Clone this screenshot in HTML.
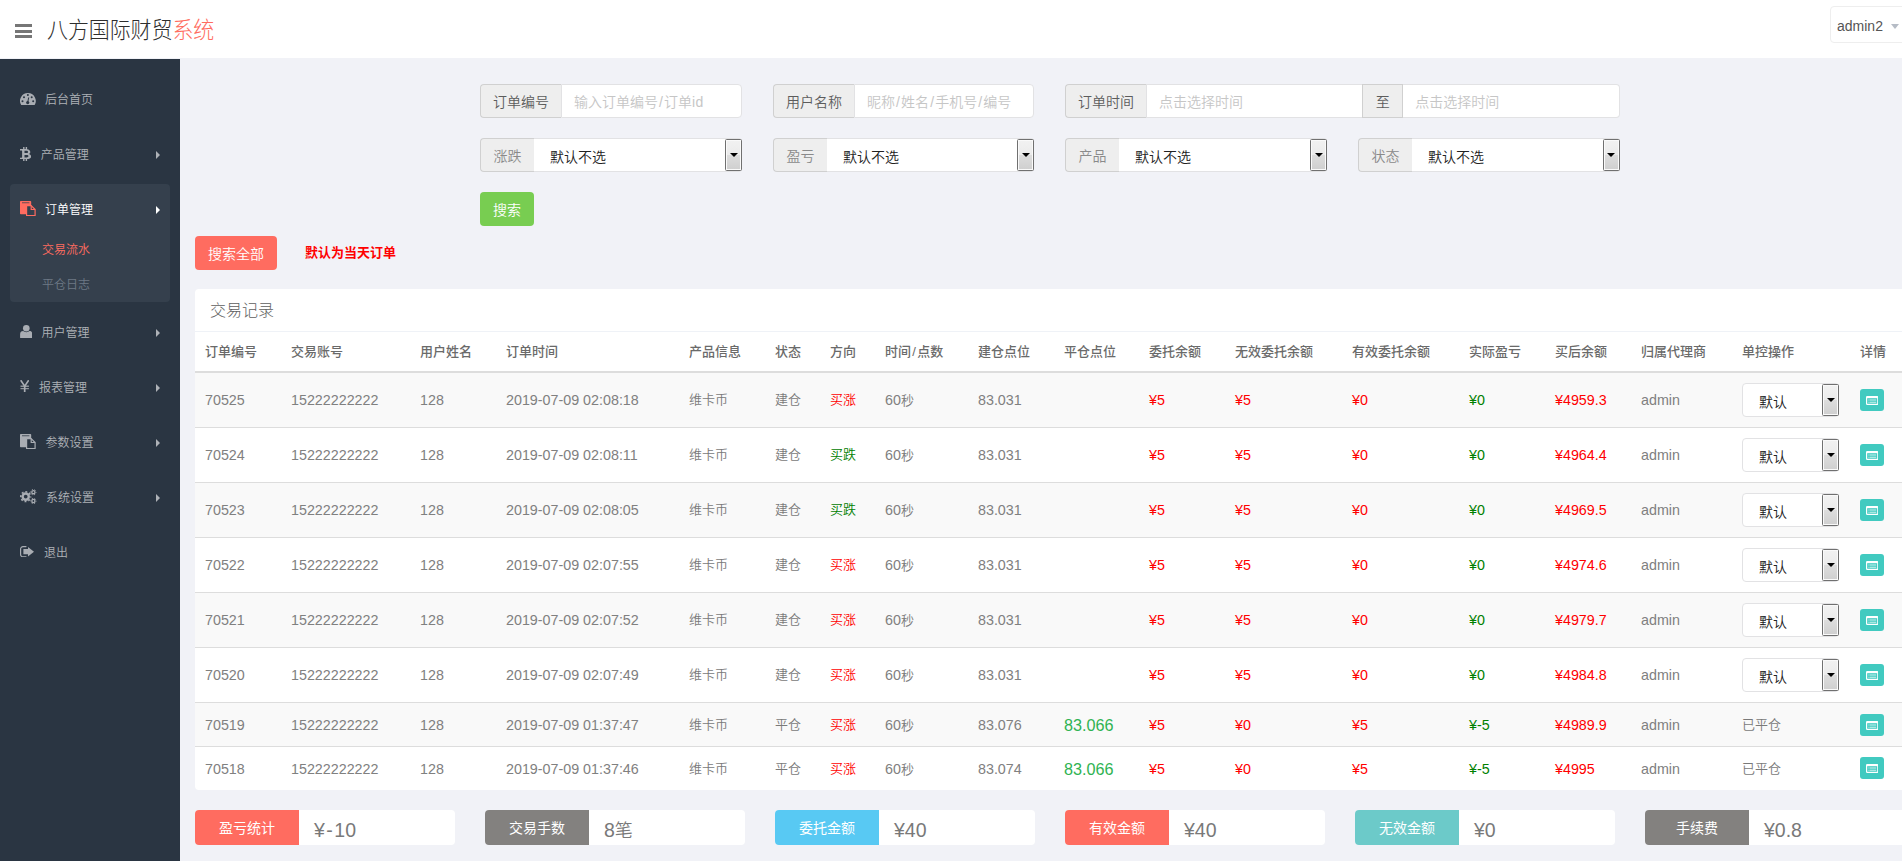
<!DOCTYPE html>
<html lang="zh-CN">
<head>
<meta charset="utf-8">
<title>八方国际财贸系统</title>
<style>
*{box-sizing:border-box}
html,body{margin:0;padding:0}
body{width:1902px;height:861px;overflow:hidden;position:relative;background:#f1f2f7;color:#797979;
 font-family:"Liberation Sans","Noto Sans CJK SC",sans-serif;font-size:13px;line-height:1.428;font-weight:350}
.abs{position:absolute}
/* header */
#hd{position:absolute;left:0;top:0;width:1902px;height:58px;background:#fff}
#bars{position:absolute;left:15px;top:24px;width:17px;height:14px}
#bars i{display:block;height:3px;background:#767676;margin-bottom:2.5px}
#logo{position:absolute;left:47px;top:14px;transform:scaleY(1.08);transform-origin:50% 50%;font-size:21px;line-height:32px;color:#2e2e2e;font-weight:300;white-space:nowrap;letter-spacing:-0.1px}
#logo span{color:#ff6c60}
#user{position:absolute;left:1830px;top:6px;width:90px;height:37px;border:1px solid #eee;border-radius:4px;background:#fff}
#user b{position:absolute;left:6px;top:9px;font-weight:normal;font-size:14px;line-height:20px;color:#555}
#user i{position:absolute;left:59.500px;top:17px;width:0;height:0;border-left:4px solid transparent;border-right:4px solid transparent;border-top:5px solid #b6bcc6}
/* sidebar */
#sb{position:absolute;left:0;top:59px;width:180px;height:802px;background:#2a3542}
#sb .act{position:absolute;left:10px;top:125px;width:160px;height:118px;background:#35404d;border-radius:4px}
.mi{position:absolute;left:0;width:180px;height:20px;font-size:12px;line-height:20px;color:#aeb2b7;white-space:nowrap}
.mi svg{position:absolute}
.mi em{position:absolute;font-style:normal;top:0}
.mi u{position:absolute;left:156px;top:6px;width:0;height:0;border-top:4px solid transparent;border-bottom:4px solid transparent;border-left:4.5px solid #aeb2b7}
.mi.on{color:#fff}
.mi.on u{border-left-color:#fff}
.sub{position:absolute;left:42px;font-size:12px;line-height:20px;height:20px;color:#6e7985;white-space:nowrap}
.sub.on{color:#ff6c60}

/* form */
.ig{position:absolute;height:34px;display:flex;font-size:14px;line-height:20px}
.ig>*{height:34px;border:1px solid #e2e2e4;padding:7px 12px 5px;white-space:nowrap;background:#fff}
.ig .ad{background:#eee;border-color:#d0d0d0;color:#5c5c5c;border-radius:4px 0 0 4px;border-right:0;flex:none}
.ig .ad.l{color:#8a8a8a;width:54px;padding-left:0;padding-right:0;text-align:center}
.ig .mid{border-radius:0;border-left:1px solid #d0d0d0;border-right:1px solid #d0d0d0}
.ig .in{flex:1;color:#c6c6c6;border-radius:0 4px 4px 0}
.ig .in.sq{border-radius:0;border-right:0}
.ig .sel{flex:1;color:#222;border-radius:0 4px 4px 0;position:relative;padding:8px 12px 4px 16px;border-left:0}
.dd{position:absolute;right:-1px;top:0;width:17px;height:32px;border:1px solid #707070;border-radius:1.500px;background:linear-gradient(#f2f2f2,#ebebeb 49%,#dddddd 50%,#cfcfcf);box-shadow:inset 0 0 0 1px #fafafa}
.dd:after{content:"";position:absolute;left:3.500px;top:12.500px;border-left:4px solid transparent;border-right:4px solid transparent;border-top:4.500px solid #000}
.btn{position:absolute;height:34px;border-radius:4px;color:#fff;font-size:14px;line-height:20px;padding:8px 0 6px;text-align:center;white-space:nowrap}

/* panel */
#panel{position:absolute;left:195px;top:289px;width:1720px;height:501px;background:#fff;border-radius:4px}
#ph{position:absolute;left:15px;top:11px;font-size:16px;line-height:22px;font-weight:300;color:#5e5e5e;white-space:nowrap}
#phb{position:absolute;left:0;top:42px;width:100%;height:1px;background:#eff2f7}
table{position:absolute;left:0;top:43px;border-collapse:separate;border-spacing:0;table-layout:fixed;width:1720px}
th,td{padding:0 10px;text-align:left;vertical-align:middle;white-space:nowrap;overflow:visible}
th{height:41px;border-bottom:2px solid #ddd;font-weight:500;font-size:13px;color:#6a6a6a;padding-top:2px}
td{height:55px;border-bottom:1px solid #ddd;font-size:14.300px;padding-top:0;color:#808080}
tr.s td{height:44px;padding-top:2px}
tr.s .dt{position:relative;top:-1px}
tr.last .dt{top:-2px}
tr.last td{border-bottom:0;height:43px}
tr.o td{background:#f9f9f9}
td .c,td.c{font-size:13px;color:#797979}
td.c.r,td.r{color:#f00}td.c.g,td.g{color:#008000}
.r{color:#f00}.g{color:#008000}
.big{font-size:16.200px;color:#2fb352}
.tsel{position:relative;width:97px;height:34px;border:1px solid #e2e2e4;border-radius:4px;background:#fff;color:#222;font-size:14px;line-height:20px;padding:7.500px 0 0 16px}
.dt{display:block;width:24px;height:22px;border-radius:3px;background:#41cac0;position:relative}
.dt svg{position:absolute;left:5.800px;top:7px}
/* stats */
.st{position:absolute;top:810px;width:260px;height:35px;background:#fff;border-radius:4px;overflow:hidden}
.st b{position:absolute;left:0;top:0;width:104px;height:35px;color:#fff;font-weight:normal;font-size:14px;line-height:20px;padding-top:8px;text-align:center}
.st span{position:absolute;left:119px;top:7px;font-size:19.500px;line-height:26px;color:#797979;white-space:nowrap}
.st span i{font-style:normal;font-size:18px}
</style>
</head>
<body>
<div id="hd">
  <div id="bars"><i></i><i></i><i></i></div>
  <div id="logo">八方国际财贸<span>系统</span></div>
  <div id="user"><b>admin2</b><i></i></div>
</div>
<div id="sb">
  <div class="act"></div>
  <div class="mi" style="top:30.500px"><svg width="15.800" height="12.500" viewBox="0 0 15.800 12.500" style="left:19.750px;top:3.200px"><path d="M7.900 0a7.900 7.900 0 0 0-6.600 12.200c.2.200.4.300.7.300h11.800c.3 0 .5-.1.7-.3A7.900 7.900 0 0 0 7.900 0z" fill="#a9adb3"/><g fill="#2a3542"><circle cx="7.900" cy="2.100" r="1"/><circle cx="4" cy="4.200" r="1"/><circle cx="11.700" cy="4.200" r="1"/><circle cx="2.500" cy="8.300" r="1"/><circle cx="13.200" cy="8.300" r="1"/><circle cx="7.700" cy="9.600" r="1.600"/><path d="M7.200 9.200l1-4.800 1 .2-1 4.800z"/></g></svg><em style="left:45px;top:.5px">后台首页</em></div>
  <div class="mi" style="top:85.500px"><svg width="11.200" height="14.100" viewBox="0 0 11.200 14.100" style="left:19.900px;top:2.500px"><path fill-rule="evenodd" fill="#a9adb3" d="M3.100 0h1.400v2.100h1.200V0h1.400v2.150c2 .2 3.200 1.250 3.200 2.750 0 1.100-.6 1.800-1.500 2.100 1.400.3 2.300 1.200 2.300 2.500 0 1.600-1.400 2.400-4 2.500v2.100H5.700V12H4.500v2.100H3.100V12H0v-1.300h1.600c.3 0 .5-.2.500-.5V3.900c0-.3-.2-.5-.5-.5H0V2.100h3.100zM4.500 3.800v2.300h1.800C7.400 6.100 8 5.700 8 4.900S7.400 3.800 6.300 3.800zM4.500 7.900v2.500h2.100c1.200 0 1.900-.4 1.900-1.300S7.800 7.900 6.600 7.900z"/></svg><em style="left:40.700px;top:.5px">产品管理</em><u></u></div>
  <div class="mi on" style="top:140.500px"><svg width="15.700" height="15.300" viewBox="0 0 15.700 15.300" style="left:19.9px;top:1.3px"><path d="M.8 0h9.600a.8.8 0 0 1 .8.8v12.400H.8a.8.8 0 0 1-.8-.8V.8A.8.8 0 0 1 .8 0z" fill="#ff6c60"/><path d="M2.400 1.750h6.600" stroke="#35404d" stroke-width=".75" stroke-linecap="round"/><path d="M6.600 4.600h4.600l3.900 3.900v6.200H6.600z" fill="#35404d" stroke="#ff6c60" stroke-width="1.200" stroke-linejoin="round"/><path d="M11.200 4.600v3.900h3.900" fill="none" stroke="#ff6c60" stroke-width="1.200"/></svg><em style="left:45px;top:.5px">订单管理</em><u></u></div>
  <div class="sub on" style="top:181px">交易流水</div>
  <div class="sub" style="top:215.500px">平仓日志</div>
  <div class="mi" style="top:264px"><svg width="12.600" height="13.500" viewBox="0 0 12.600 13.500" style="left:19.750px;top:1.800px"><g fill="#a9adb3"><circle cx="6.300" cy="3.300" r="3.300"/><path d="M.1 12.400V9.300c0-2 1.300-3.200 3-3.200.8.700 1.900 1.100 3.200 1.100s2.400-.4 3.200-1.100c1.700 0 3 1.200 3 3.200v3.100c0 .6-.4 1.100-1 1.100H1.100c-.6 0-1-.5-1-1.100z"/></g></svg><em style="left:41.600px">用户管理</em><u></u></div>
  <div class="mi" style="top:319px"><svg width="9.400" height="12.400" viewBox="0 0 9.400 12.400" style="left:19.750px;top:1.800px"><g fill="none" stroke="#a9adb3"><path d="M.7.200l4 5.900 4-5.900" stroke-width="1.600"/><path d="M4.700 5.700v6.700" stroke-width="1.700"/><path d="M.5 6.200h8.400" stroke-width="1.200"/><path d="M.5 8.700h8.400" stroke-width="1"/></g></svg><em style="left:39px">报表管理</em><u></u></div>
  <div class="mi" style="top:374px"><svg width="15.700" height="15.300" viewBox="0 0 15.700 15.300" style="left:19.9px;top:0.8px"><path d="M.8 0h9.600a.8.8 0 0 1 .8.8v12.400H.8a.8.8 0 0 1-.8-.8V.8A.8.8 0 0 1 .8 0z" fill="#a9adb3"/><path d="M2.400 1.750h6.600" stroke="#2a3542" stroke-width=".75" stroke-linecap="round"/><path d="M6.600 4.600h4.600l3.900 3.900v6.200H6.600z" fill="#2a3542" stroke="#a9adb3" stroke-width="1.200" stroke-linejoin="round"/><path d="M11.200 4.600v3.900h3.900" fill="none" stroke="#a9adb3" stroke-width="1.200"/></svg><em style="left:45.400px">参数设置</em><u></u></div>
  <div class="mi" style="top:429px"><svg width="17" height="15.200" viewBox="0 0 17 15.200" style="left:19.600px;top:1px"><g fill="none" stroke="#a9adb3"><circle cx="5.700" cy="7.600" r="3.100" stroke-width="2.400"/><circle cx="5.700" cy="7.600" r="4.900" stroke-width="1.600" stroke-dasharray="1.900 1.948" stroke-dashoffset=".95"/><circle cx="13.400" cy="3.200" r="1.550" stroke-width="1.300"/><circle cx="13.400" cy="3.200" r="2.650" stroke-width="1" stroke-dasharray="1.300 1.475" stroke-dashoffset=".65"/><circle cx="13.400" cy="12" r="1.550" stroke-width="1.300"/><circle cx="13.400" cy="12" r="2.650" stroke-width="1" stroke-dasharray="1.300 1.475" stroke-dashoffset=".65"/></g></svg><em style="left:46px">系统设置</em><u></u></div>
  <div class="mi" style="top:484px"><svg width="14.200" height="11.400" viewBox="0 0 14.200 11.400" style="left:19.750px;top:2.900px"><path d="M6 .6H3A2.400 2.400 0 0 0 .6 3v5.400A2.400 2.400 0 0 0 3 10.800h3" fill="none" stroke="#a9adb3" stroke-width="1.200" stroke-linecap="round"/><path d="M3.400 3.100H8V.9l6.100 4.800L8 10.500V8.300H3.400z" fill="#a9adb3"/></svg><em style="left:44px">退出</em></div>
</div>
<div id="main">
<div class="ig" style="left:480px;top:84px;width:262px"><span class="ad">订单编号</span><span class="in">输入订单编号<span style="padding:0 1.100px">/</span>订单<span style="letter-spacing:.4px">id</span></span></div>
<div class="ig" style="left:773px;top:84px;width:261px"><span class="ad">用户名称</span><span class="in">昵称<span style="padding:0 1.100px">/</span>姓名<span style="padding:0 1.100px">/</span>手机号<span style="padding:0 1.100px">/</span>编号</span></div>
<div class="ig" style="left:1065px;top:84px;width:554.500px"><span class="ad">订单时间</span><span class="in sq">点击选择时间</span><span class="ad mid" style="flex:none;width:41px;padding-left:0;padding-right:0;text-align:center">至</span><span class="in" style="border-left:0">点击选择时间</span></div>

<div class="ig" style="left:480px;top:138px;width:262px"><span class="ad l">涨跌</span><span class="sel">默认不选<i class="dd"></i></span></div>
<div class="ig" style="left:773px;top:138px;width:261px"><span class="ad l">盈亏</span><span class="sel">默认不选<i class="dd"></i></span></div>
<div class="ig" style="left:1065px;top:138px;width:262px"><span class="ad l">产品</span><span class="sel">默认不选<i class="dd"></i></span></div>
<div class="ig" style="left:1358px;top:138px;width:261.500px"><span class="ad l">状态</span><span class="sel">默认不选<i class="dd"></i></span></div>

<div class="btn" style="left:480px;top:192px;width:54px;background:#78cd51">搜索</div>
<div class="btn" style="left:195px;top:236px;width:82px;background:#ff6c60">搜索全部</div>
<div class="abs" style="left:305px;top:242.500px;font-size:13px;line-height:20px;font-weight:bold;color:#f00;white-space:nowrap">默认为当天订单</div>
<div id="panel"><div id="ph">交易记录</div><div id="phb"></div>
<table><colgroup><col style="width:86px"><col style="width:129px"><col style="width:86px"><col style="width:183px"><col style="width:86px"><col style="width:55px"><col style="width:55px"><col style="width:93px"><col style="width:86px"><col style="width:85px"><col style="width:86px"><col style="width:117px"><col style="width:117px"><col style="width:86px"><col style="width:86px"><col style="width:101px"><col style="width:118px"><col style="width:70px"></colgroup>
<thead><tr><th>订单编号</th><th>交易账号</th><th>用户姓名</th><th>订单时间</th><th>产品信息</th><th>状态</th><th>方向</th><th>时间<span style="padding:0 1.300px">/</span>点数</th><th>建仓点位</th><th>平仓点位</th><th>委托余额</th><th>无效委托余额</th><th>有效委托余额</th><th>实际盈亏</th><th>买后余额</th><th>归属代理商</th><th>单控操作</th><th>详情</th></tr></thead>
<tbody>
<tr class="o"><td>70525</td><td>15222222222</td><td>128</td><td>2019-07-09 02:08:18</td><td class="c">维卡币</td><td class="c">建仓</td><td class="c r">买涨</td><td>60<span class="c">秒</span></td><td>83.031</td><td></td><td class="r">¥5</td><td class="r">¥5</td><td class="r">¥0</td><td class="g">¥0</td><td class="r">¥4959.3</td><td>admin</td><td><div class="tsel">默认<i class="dd"></i></div></td><td><span class="dt"><svg width="12.400" height="9" viewBox="0 0 12.400 9"><rect x=".6" y=".6" width="11.200" height="7.800" rx=".6" fill="none" stroke="#fff" stroke-width="1.200"/><path d="M.6 1.500h11.200" stroke="#fff" stroke-width="1.400"/><path d="M3.400 4h6.800M3.400 6.200h6.800" stroke="#fff" stroke-opacity=".75" stroke-width="1.100"/><path d="M2 4h1M2 6.200h1" stroke="#fff" stroke-opacity=".45" stroke-width="1.100"/></svg></span></td></tr>
<tr class=""><td>70524</td><td>15222222222</td><td>128</td><td>2019-07-09 02:08:11</td><td class="c">维卡币</td><td class="c">建仓</td><td class="c g">买跌</td><td>60<span class="c">秒</span></td><td>83.031</td><td></td><td class="r">¥5</td><td class="r">¥5</td><td class="r">¥0</td><td class="g">¥0</td><td class="r">¥4964.4</td><td>admin</td><td><div class="tsel">默认<i class="dd"></i></div></td><td><span class="dt"><svg width="12.400" height="9" viewBox="0 0 12.400 9"><rect x=".6" y=".6" width="11.200" height="7.800" rx=".6" fill="none" stroke="#fff" stroke-width="1.200"/><path d="M.6 1.500h11.200" stroke="#fff" stroke-width="1.400"/><path d="M3.400 4h6.800M3.400 6.200h6.800" stroke="#fff" stroke-opacity=".75" stroke-width="1.100"/><path d="M2 4h1M2 6.200h1" stroke="#fff" stroke-opacity=".45" stroke-width="1.100"/></svg></span></td></tr>
<tr class="o"><td>70523</td><td>15222222222</td><td>128</td><td>2019-07-09 02:08:05</td><td class="c">维卡币</td><td class="c">建仓</td><td class="c g">买跌</td><td>60<span class="c">秒</span></td><td>83.031</td><td></td><td class="r">¥5</td><td class="r">¥5</td><td class="r">¥0</td><td class="g">¥0</td><td class="r">¥4969.5</td><td>admin</td><td><div class="tsel">默认<i class="dd"></i></div></td><td><span class="dt"><svg width="12.400" height="9" viewBox="0 0 12.400 9"><rect x=".6" y=".6" width="11.200" height="7.800" rx=".6" fill="none" stroke="#fff" stroke-width="1.200"/><path d="M.6 1.500h11.200" stroke="#fff" stroke-width="1.400"/><path d="M3.400 4h6.800M3.400 6.200h6.800" stroke="#fff" stroke-opacity=".75" stroke-width="1.100"/><path d="M2 4h1M2 6.200h1" stroke="#fff" stroke-opacity=".45" stroke-width="1.100"/></svg></span></td></tr>
<tr class=""><td>70522</td><td>15222222222</td><td>128</td><td>2019-07-09 02:07:55</td><td class="c">维卡币</td><td class="c">建仓</td><td class="c r">买涨</td><td>60<span class="c">秒</span></td><td>83.031</td><td></td><td class="r">¥5</td><td class="r">¥5</td><td class="r">¥0</td><td class="g">¥0</td><td class="r">¥4974.6</td><td>admin</td><td><div class="tsel">默认<i class="dd"></i></div></td><td><span class="dt"><svg width="12.400" height="9" viewBox="0 0 12.400 9"><rect x=".6" y=".6" width="11.200" height="7.800" rx=".6" fill="none" stroke="#fff" stroke-width="1.200"/><path d="M.6 1.500h11.200" stroke="#fff" stroke-width="1.400"/><path d="M3.400 4h6.800M3.400 6.200h6.800" stroke="#fff" stroke-opacity=".75" stroke-width="1.100"/><path d="M2 4h1M2 6.200h1" stroke="#fff" stroke-opacity=".45" stroke-width="1.100"/></svg></span></td></tr>
<tr class="o"><td>70521</td><td>15222222222</td><td>128</td><td>2019-07-09 02:07:52</td><td class="c">维卡币</td><td class="c">建仓</td><td class="c r">买涨</td><td>60<span class="c">秒</span></td><td>83.031</td><td></td><td class="r">¥5</td><td class="r">¥5</td><td class="r">¥0</td><td class="g">¥0</td><td class="r">¥4979.7</td><td>admin</td><td><div class="tsel">默认<i class="dd"></i></div></td><td><span class="dt"><svg width="12.400" height="9" viewBox="0 0 12.400 9"><rect x=".6" y=".6" width="11.200" height="7.800" rx=".6" fill="none" stroke="#fff" stroke-width="1.200"/><path d="M.6 1.500h11.200" stroke="#fff" stroke-width="1.400"/><path d="M3.400 4h6.800M3.400 6.200h6.800" stroke="#fff" stroke-opacity=".75" stroke-width="1.100"/><path d="M2 4h1M2 6.200h1" stroke="#fff" stroke-opacity=".45" stroke-width="1.100"/></svg></span></td></tr>
<tr class=""><td>70520</td><td>15222222222</td><td>128</td><td>2019-07-09 02:07:49</td><td class="c">维卡币</td><td class="c">建仓</td><td class="c r">买涨</td><td>60<span class="c">秒</span></td><td>83.031</td><td></td><td class="r">¥5</td><td class="r">¥5</td><td class="r">¥0</td><td class="g">¥0</td><td class="r">¥4984.8</td><td>admin</td><td><div class="tsel">默认<i class="dd"></i></div></td><td><span class="dt"><svg width="12.400" height="9" viewBox="0 0 12.400 9"><rect x=".6" y=".6" width="11.200" height="7.800" rx=".6" fill="none" stroke="#fff" stroke-width="1.200"/><path d="M.6 1.500h11.200" stroke="#fff" stroke-width="1.400"/><path d="M3.400 4h6.800M3.400 6.200h6.800" stroke="#fff" stroke-opacity=".75" stroke-width="1.100"/><path d="M2 4h1M2 6.200h1" stroke="#fff" stroke-opacity=".45" stroke-width="1.100"/></svg></span></td></tr>
<tr class="o s"><td>70519</td><td>15222222222</td><td>128</td><td>2019-07-09 01:37:47</td><td class="c">维卡币</td><td class="c">平仓</td><td class="c r">买涨</td><td>60<span class="c">秒</span></td><td>83.076</td><td><span class="big">83.066</span></td><td class="r">¥5</td><td class="r">¥0</td><td class="r">¥5</td><td class="g">¥-5</td><td class="r">¥4989.9</td><td>admin</td><td><span class="c" style="position:relative;top:-.8px">已平仓</span></td><td><span class="dt"><svg width="12.400" height="9" viewBox="0 0 12.400 9"><rect x=".6" y=".6" width="11.200" height="7.800" rx=".6" fill="none" stroke="#fff" stroke-width="1.200"/><path d="M.6 1.500h11.200" stroke="#fff" stroke-width="1.400"/><path d="M3.400 4h6.800M3.400 6.200h6.800" stroke="#fff" stroke-opacity=".75" stroke-width="1.100"/><path d="M2 4h1M2 6.200h1" stroke="#fff" stroke-opacity=".45" stroke-width="1.100"/></svg></span></td></tr>
<tr class="s last"><td>70518</td><td>15222222222</td><td>128</td><td>2019-07-09 01:37:46</td><td class="c">维卡币</td><td class="c">平仓</td><td class="c r">买涨</td><td>60<span class="c">秒</span></td><td>83.074</td><td><span class="big">83.066</span></td><td class="r">¥5</td><td class="r">¥0</td><td class="r">¥5</td><td class="g">¥-5</td><td class="r">¥4995</td><td>admin</td><td><span class="c" style="position:relative;top:-.8px">已平仓</span></td><td><span class="dt"><svg width="12.400" height="9" viewBox="0 0 12.400 9"><rect x=".6" y=".6" width="11.200" height="7.800" rx=".6" fill="none" stroke="#fff" stroke-width="1.200"/><path d="M.6 1.500h11.200" stroke="#fff" stroke-width="1.400"/><path d="M3.400 4h6.800M3.400 6.200h6.800" stroke="#fff" stroke-opacity=".75" stroke-width="1.100"/><path d="M2 4h1M2 6.200h1" stroke="#fff" stroke-opacity=".45" stroke-width="1.100"/></svg></span></td></tr>
</tbody></table></div>
<div class="st" style="left:195px"><b style="background:#ff6c60">盈亏统计</b><span>¥<em style="font-style:normal;padding:0 1.500px">-</em>10</span></div>
<div class="st" style="left:485px"><b style="background:#83817f">交易手数</b><span>8<i>笔</i></span></div>
<div class="st" style="left:775px"><b style="background:#58c9f3">委托金额</b><span>¥40</span></div>
<div class="st" style="left:1065px"><b style="background:#ff6c60">有效金额</b><span>¥40</span></div>
<div class="st" style="left:1355px"><b style="background:#6ccac9">无效金额</b><span>¥0</span></div>
<div class="st" style="left:1645px"><b style="background:#83817f">手续费</b><span>¥0.8</span></div>
</div>
</body>
</html>
